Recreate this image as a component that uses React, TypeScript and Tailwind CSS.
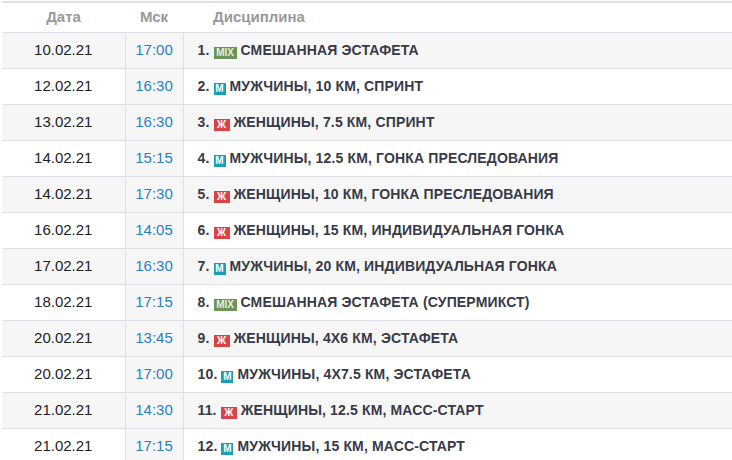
import React from "react";

type Row = { d: string; t: string; n: number; k: "mix" | "m" | "w"; s: string };

const rows: Row[] = [
  { d: "10.02.21", t: "17:00", n: 1, k: "mix", s: "СМЕШАННАЯ ЭСТАФЕТА" },
  { d: "12.02.21", t: "16:30", n: 2, k: "m", s: "МУЖЧИНЫ, 10 КМ, СПРИНТ" },
  { d: "13.02.21", t: "16:30", n: 3, k: "w", s: "ЖЕНЩИНЫ, 7.5 КМ, СПРИНТ" },
  { d: "14.02.21", t: "15:15", n: 4, k: "m", s: "МУЖЧИНЫ, 12.5 КМ, ГОНКА ПРЕСЛЕДОВАНИЯ" },
  { d: "14.02.21", t: "17:30", n: 5, k: "w", s: "ЖЕНЩИНЫ, 10 КМ, ГОНКА ПРЕСЛЕДОВАНИЯ" },
  { d: "16.02.21", t: "14:05", n: 6, k: "w", s: "ЖЕНЩИНЫ, 15 КМ, ИНДИВИДУАЛЬНАЯ ГОНКА" },
  { d: "17.02.21", t: "16:30", n: 7, k: "m", s: "МУЖЧИНЫ, 20 КМ, ИНДИВИДУАЛЬНАЯ ГОНКА" },
  { d: "18.02.21", t: "17:15", n: 8, k: "mix", s: "СМЕШАННАЯ ЭСТАФЕТА (СУПЕРМИКСТ)" },
  { d: "20.02.21", t: "13:45", n: 9, k: "w", s: "ЖЕНЩИНЫ, 4Х6 КМ, ЭСТАФЕТА" },
  { d: "20.02.21", t: "17:00", n: 10, k: "m", s: "МУЖЧИНЫ, 4Х7.5 КМ, ЭСТАФЕТА" },
  { d: "21.02.21", t: "14:30", n: 11, k: "w", s: "ЖЕНЩИНЫ, 12.5 КМ, МАСС-СТАРТ" },
  { d: "21.02.21", t: "17:15", n: 12, k: "m", s: "МУЖЧИНЫ, 15 КМ, МАСС-СТАРТ" },
];

function Badge({ k }: { k: Row["k"] }) {
  if (k === "mix")
    return (
      <span className="inline-flex items-center justify-center h-[12px] w-[23px] bg-[#6a9458] text-[#e6efdf] text-[10px] font-bold leading-none tracking-normal mr-[4px] align-[-1px]">
        MIX
      </span>
    );
  if (k === "m")
    return (
      <span className="inline-flex items-center justify-center h-[12px] w-[12px] bg-[#19a0b4] text-white text-[10px] font-bold leading-none tracking-normal mr-[4px] align-[-1px]">
        М
      </span>
    );
  return (
    <span className="inline-flex items-center justify-center h-[12px] w-[16px] bg-[#dc4146] text-white text-[10px] font-bold leading-none tracking-normal mr-[4px] align-[-1px]">
      Ж
    </span>
  );
}

export default function App() {
  return (
    <div className="bg-white w-[732px] pl-[2px] pt-[1px]" style={{ fontFamily: '"Liberation Sans", Arial, sans-serif' }}>
      <table className="w-[730px] border-collapse">
        <thead>
          <tr className="h-[30px] border-t-2 border-b border-[#dde0e5]">
            <th className="w-[123px] text-center text-[15px] font-bold text-[#999999] p-0">Дата</th>
            <th className="w-[58px] text-center text-[15px] font-bold text-[#999999] p-0">Мск</th>
            <th className="text-left text-[15px] font-bold text-[#999999] pl-[30px] p-0">Дисциплина</th>
          </tr>
        </thead>
        <tbody>
          {rows.map((r, i) => (
            <tr
              key={i}
              className={`h-[36px] border-b border-[#dde0e5] ${i % 2 === 0 ? "bg-[#f6f6f6]" : "bg-white"}`}
            >
              <td className="text-center text-[15px] text-[#222222] p-0 border-r border-[#dde0e5]">{r.d}</td>
              <td className="text-center text-[15px] text-[#2b7ec4] p-0 border-r border-[#dde0e5] bg-[#f6f6f6]">{r.t}</td>
              <td className="pl-[14px] p-0 text-[14px] font-bold text-[#373a47] tracking-[0.15px] whitespace-nowrap">
                {r.n}. <Badge k={r.k} />
                {r.s}
              </td>
            </tr>
          ))}
        </tbody>
      </table>
    </div>
  );
}
